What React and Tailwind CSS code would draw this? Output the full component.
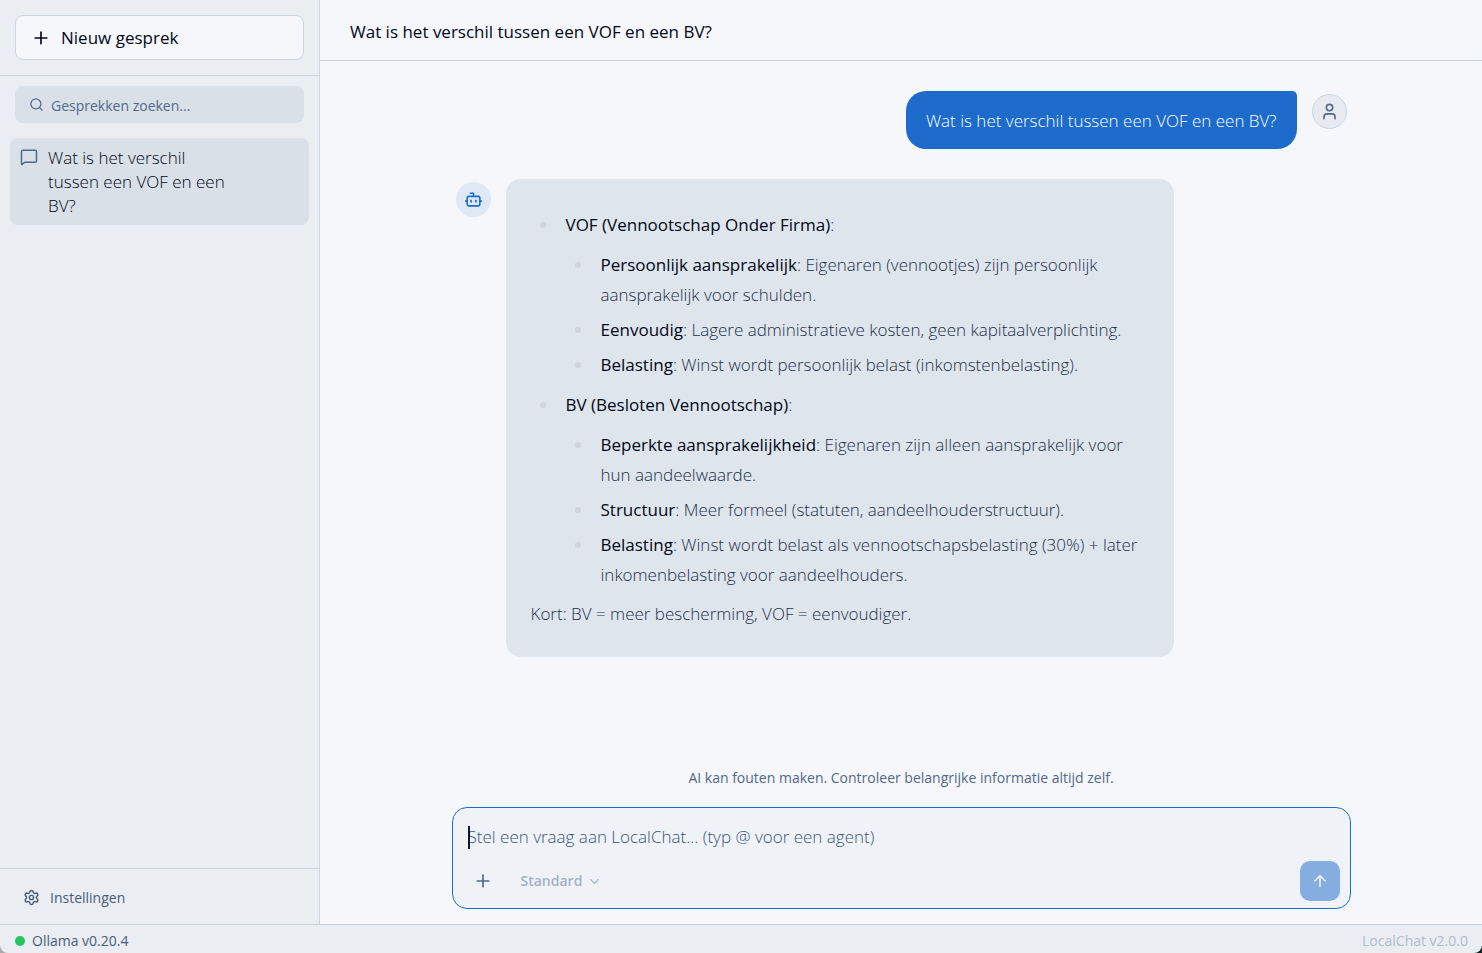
import { ArrowUp, Bot, ChevronDown, MessageSquare, Plus, Search, Settings, User } from "lucide-react";

const question = "Wat is het verschil tussen een VOF en een BV?";

const answer = [
  {
    title: "VOF (Vennootschap Onder Firma)",
    items: [
      ["Persoonlijk aansprakelijk", "Eigenaren (vennootjes) zijn persoonlijk aansprakelijk voor schulden."],
      ["Eenvoudig", "Lagere administratieve kosten, geen kapitaalverplichting."],
      ["Belasting", "Winst wordt persoonlijk belast (inkomstenbelasting)."],
    ],
  },
  {
    title: "BV (Besloten Vennootschap)",
    items: [
      ["Beperkte aansprakelijkheid", "Eigenaren zijn alleen aansprakelijk voor hun aandeelwaarde."],
      ["Structuur", "Meer formeel (statuten, aandeelhouderstructuur)."],
      ["Belasting", "Winst wordt belast als vennootschapsbelasting (30%) + later inkomenbelasting voor aandeelhouders."],
    ],
  },
];

function Bullet() {
  return <span aria-hidden="true" className="mt-3 mr-5 ml-[9px] size-1.5 shrink-0 rounded-full bg-[#d1d5db]" />;
}

function Sidebar() {
  return (
    <aside className="flex w-80 shrink-0 flex-col border-r border-[#cbd5e1] bg-[#eaeef3]">
      <div className="border-b border-[#cbd5e1] p-[15px]">
        <button className="flex h-[45px] w-full items-center gap-2.5 rounded-lg border border-[#cbd5e1] bg-[#f5f7fb] px-[15px] pt-px text-[17px] font-medium text-[#020817]">
          <Plus size={20} strokeWidth={2} />
          Nieuw gesprek
        </button>
      </div>
      <div className="px-[15px] pt-2.5">
        <label className="flex h-[37px] items-center gap-[7px] rounded-lg bg-[#d9e0e8] px-3.5 text-[#52698a]">
          <Search size={15} strokeWidth={2} />
          <input
            aria-label="Gesprekken zoeken"
            placeholder="Gesprekken zoeken..."
            className="min-w-0 flex-1 bg-transparent pt-0.5 text-sm outline-none placeholder:text-[#52698a]"
          />
        </label>
      </div>
      <nav className="flex-1 px-2.5 pt-[15px]">
        <button className="flex w-full gap-2.5 rounded-lg bg-[#d9e0e8] pt-2 pr-[72px] pb-[7px] pl-2.5 text-left text-[17px] leading-6 font-light text-[#020817]">
          <MessageSquare size={18} strokeWidth={2} className="mt-0.5 shrink-0 text-[#52698a]" />
          <span>{question}</span>
        </button>
      </nav>
      <div className="border-t border-[#cbd5e1] px-[15px] py-2.5">
        <button className="flex h-[35px] w-full items-center gap-2.5 px-2 pt-0.5 text-sm text-[#475c7a]">
          <Settings size={17} strokeWidth={2} />
          Instellingen
        </button>
      </div>
    </aside>
  );
}

function Conversation() {
  return (
    <section className="flex-1 overflow-hidden px-5 pt-[30px]">
      <div className="mx-auto flex max-w-[891px] flex-col gap-[30px]">
        <div className="flex items-start justify-end gap-[15px]">
          <p className="rounded-[20px] rounded-tr-[5px] bg-[#1d6bca] px-5 pt-[15px] pb-[13px] text-[17px] leading-[30px] font-light text-white">
            {question}
          </p>
          <span className="mt-[3px] flex size-[35px] shrink-0 items-center justify-center rounded-full border border-[#cbd5e1] bg-[#e7ebf1] text-[#52698a]">
            <User size={19} strokeWidth={2} />
          </span>
        </div>
        <div className="flex items-start gap-[15px]">
          <span className="mt-[3px] flex size-[35px] shrink-0 items-center justify-center rounded-full bg-[#dfe9f5] text-[#1d6bca]">
            <Bot size={19} strokeWidth={2} />
          </span>
          <article className="flex max-w-3/4 flex-col gap-[9px] rounded-[15px] bg-[#dee5ec] px-[25px] pt-[31px] pb-7 text-[17px] leading-[30px] font-light text-[#22304a]">
            <ul className="flex flex-col gap-2.5">
              {answer.map((group) => (
                <li key={group.title} className="flex">
                  <Bullet />
                  <div className="flex flex-col gap-2.5">
                    <p>
                      <strong className="font-medium text-[#020817]">{group.title}</strong>:
                    </p>
                    <ul className="flex flex-col gap-[5px]">
                      {group.items.map(([term, text]) => (
                        <li key={term} className="flex">
                          <Bullet />
                          <p>
                            <strong className="font-medium text-[#020817]">{term}</strong>: {text}
                          </p>
                        </li>
                      ))}
                    </ul>
                  </div>
                </li>
              ))}
            </ul>
            <p>Kort: BV = meer bescherming, VOF = eenvoudiger.</p>
          </article>
        </div>
      </div>
    </section>
  );
}

function Composer() {
  return (
    <div className="px-5 pb-[15px]">
      <p className="pb-[19px] text-center text-sm text-[#52698a]">
        AI kan fouten maken. Controleer belangrijke informatie altijd zelf.
      </p>
      <form
        className="mx-auto flex max-w-[899px] flex-col gap-2.5 rounded-[15px] border border-[#1d6bca] bg-[#eff3f8] px-2.5 pt-[15px] pb-[7px]"
        onSubmit={(event) => event.preventDefault()}
      >
        <div className="relative flex px-[5px]">
          <span aria-hidden="true" className="absolute top-[3px] h-[23px] w-0.5 bg-[#0f172a]" />
          <textarea
            rows={1}
            aria-label="Bericht"
            placeholder="Stel een vraag aan LocalChat... (typ @ voor een agent)"
            className="h-7 flex-1 resize-none bg-transparent text-[17px] leading-7 font-light text-[#0f172a] outline-none placeholder:text-[#3b5377]"
          />
        </div>
        <div className="flex items-center">
          <button type="button" aria-label="Bijlage toevoegen" className="flex size-10 items-center justify-center text-[#52698a]">
            <Plus size={20} strokeWidth={2} />
          </button>
          <button type="button" className="ml-[18px] flex items-center gap-[5px] text-sm font-semibold text-[#a3b1c2]">
            Standard
            <ChevronDown size={15} strokeWidth={2} />
          </button>
          <button aria-label="Verzenden" className="ml-auto flex size-10 items-center justify-center rounded-[10px] bg-[#86ade0] text-[#f5f7fb]">
            <ArrowUp size={18} strokeWidth={2} />
          </button>
        </div>
      </form>
    </div>
  );
}

export default function App() {
  return (
    <div className="flex h-screen flex-col bg-[#f5f7fb] font-['Open_Sans','Noto_Sans',sans-serif]">
      <div className="flex min-h-0 flex-1">
        <Sidebar />
        <main className="flex min-w-0 flex-1 flex-col">
          <header className="flex h-[61px] shrink-0 items-center border-b border-[#cbd5e1] px-[30px] pt-[3px]">
            <h1 className="text-[17px] font-medium text-[#020817]">{question}</h1>
          </header>
          <Conversation />
          <Composer />
        </main>
      </div>
      <div className="bg-linear-to-r from-[#a9a9a9] from-50% to-[#14211c] to-50%">
        <footer className="flex h-[29px] items-center justify-between rounded-b-lg border-t border-[#cbd5e1] bg-[#eaeef3] pr-3.5 pl-[15px] pt-1 text-sm">
          <span className="flex items-center gap-[7px] text-[#475c7a]">
            <span className="size-2.5 rounded-full bg-[#22c55e]" />
            Ollama v0.20.4
          </span>
          <span className="text-[#b0bccb]">LocalChat v2.0.0</span>
        </footer>
      </div>
    </div>
  );
}
